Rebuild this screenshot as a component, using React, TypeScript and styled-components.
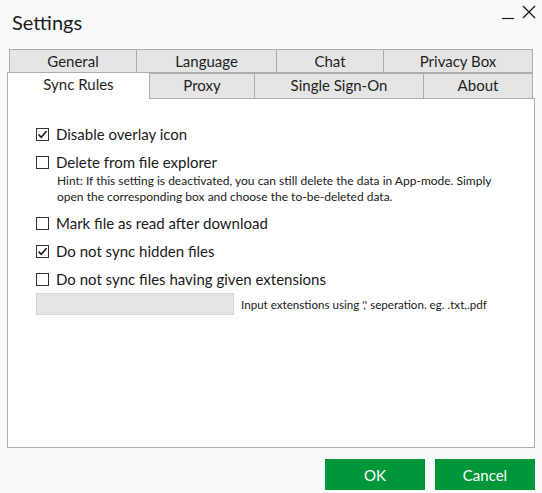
import styled, { createGlobalStyle } from "styled-components";

const Global = createGlobalStyle`
    html, body {
        margin: 0;
        padding: 0;
        background: #f9fafb;
        font-family: "Lato", "Open Sans", sans-serif;
        color: #1a1a1a;
    }
`

const Window = styled.section`
    display: flex;
    flex-direction: column;
    width: 542px;
    height: 493px;
    box-sizing: border-box;
    background: #f9fafb;
`

const TitleBar = styled.header`
    display: flex;
    justify-content: space-between;
    align-items: flex-start;
    height: 49px;
    padding: 10px 6px 0 12px;
    box-sizing: border-box;
`

const Title = styled.h1`
    margin: 0;
    font-size: 20px;
    font-weight: 400;
    color: #1a1a1a;
`

const WinControls = styled.div`
    display: flex;
    align-items: flex-start;
    gap: 7px;
    margin-top: -10px;
    svg {
        display: block;
    }
`

const Tabs = styled.nav`
    display: flex;
    flex-direction: column;
    padding-left: 7px;
`

const TabRow = styled.div<{ $indent: number }>`
    display: flex;
    padding-left: ${p => p.$indent}px;
    margin-top: ${p => (p.$indent ? 0 : -1)}px;
    align-items: flex-end;
`

const Tab = styled.div<{ $w: number; $h: number; $pad: number; $active?: boolean }>`
    display: flex;
    justify-content: center;
    align-items: center;
    width: ${p => p.$w}px;
    height: ${p => p.$h}px;
    box-sizing: border-box;
    border: 1px solid #adadad;
    border-bottom: ${p => (p.$active ? "none" : "1px solid #adadad")};
    margin-left: -1px;
    background: ${p => (p.$active ? "#ffffff" : "#e5e5e5")};
    font-size: 15px;
    color: #1f1f1f;
    position: relative;
    z-index: ${p => (p.$active ? 2 : 1)};
    padding-bottom: ${p => p.$pad}px;
    &:first-child {
        margin-left: 0;
    }
`

const Panel = styled.div`
    margin: -1px 7px 0 7px;
    height: 350px;
    box-sizing: border-box;
    border: 1px solid #adadad;
    background: #ffffff;
    padding: 25px 0 0 28px;
    display: flex;
    flex-direction: column;
`

const Option = styled.label`
    display: flex;
    align-items: center;
    gap: 7px;
    height: 20px;
    font-size: 15px;
    color: #1a1a1a;
    margin-bottom: 8px;
`

const Box = styled.span`
    display: inline-flex;
    justify-content: center;
    align-items: center;
    width: 13px;
    height: 13px;
    box-sizing: border-box;
    border: 1px solid #333333;
    background: #ffffff;
`

const Hint = styled.p`
    margin: -7px 0 8px 21px;
    font-size: 12px;
    line-height: 16px;
    color: #1a1a1a;
`

const InputLine = styled.div`
    display: flex;
    align-items: center;
    gap: 7px;
    margin-top: -4px;
`

const ExtInput = styled.input`
    all: unset;
    width: 198px;
    height: 22px;
    box-sizing: border-box;
    background: #e6e6e6;
    border: 1px solid #d4d4d4;
`

const InputHint = styled.span`
    font-size: 11.6px;
    color: #1a1a1a;
`

const Footer = styled.footer`
    display: flex;
    justify-content: flex-end;
    gap: 10px;
    padding: 11px 7px 0 0;
`

const Button = styled.button`
    all: unset;
    display: flex;
    justify-content: center;
    align-items: center;
    width: 100px;
    height: 31px;
    background: #00963a;
    color: #ffffff;
    font-family: "Lato", "Open Sans", sans-serif;
    font-size: 15px;
    cursor: pointer;
`

function Check({ checked }: { checked?: boolean }) {
    return (
        <Box>
            {checked && (
                <svg width="11" height="11" viewBox="0 0 11 11">
                    <path d="M1.5 5.5 L4.2 8.3 L9.5 2.2" fill="none" stroke="#1a1a1a" strokeWidth="1.6" />
                </svg>
            )}
        </Box>
    )
}

const row1 = [
    { label: "General", w: 128 },
    { label: "Language", w: 141 },
    { label: "Chat", w: 108 },
    { label: "Privacy Box", w: 150 },
]

const row2 = [
    { label: "Sync Rules", w: 143, active: true },
    { label: "Proxy", w: 106 },
    { label: "Single Sign-On", w: 170 },
    { label: "About", w: 110 },
]

function App() {
    return (
        <>
            <Global />
            <Window>
                <TitleBar>
                    <Title>Settings</Title>
                    <WinControls>
                        <svg width="13" height="20" viewBox="0 0 13 20">
                            <path d="M0 18.5 H12" stroke="#1a1a1a" strokeWidth="1.2" />
                        </svg>
                        <svg width="14" height="20" viewBox="0 0 14 20">
                            <path d="M1 6 L13 18 M13 6 L1 18" stroke="#1a1a1a" strokeWidth="1.3" />
                        </svg>
                    </WinControls>
                </TitleBar>
                <Tabs>
                    <TabRow $indent={2}>
                        {row1.map(t => <Tab key={t.label} $w={t.w} $h={24} $pad={1}>{t.label}</Tab>)}
                    </TabRow>
                    <TabRow $indent={0}>
                        {row2.map(t => (
                            <Tab key={t.label} $w={t.w} $h={t.active ? 27 : 26} $pad={t.active ? 4 : 3} $active={t.active}>
                                {t.label}
                            </Tab>
                        ))}
                    </TabRow>
                </Tabs>
                <Panel>
                    <Option><Check checked />Disable overlay icon</Option>
                    <Option><Check />Delete from file explorer</Option>
                    <Hint>
                        Hint: If this setting is deactivated, you can still delete the data in App-mode. Simply<br />
                        open the corresponding box and choose the to-be-deleted data.
                    </Hint>
                    <Option><Check />Mark file as read after download</Option>
                    <Option><Check checked />Do not sync hidden files</Option>
                    <Option><Check />Do not sync files having given extensions</Option>
                    <InputLine>
                        <ExtInput />
                        <InputHint>Input extenstions using ',' seperation. eg. .txt,.pdf</InputHint>
                    </InputLine>
                </Panel>
                <Footer>
                    <Button>OK</Button>
                    <Button>Cancel</Button>
                </Footer>
            </Window>
        </>
    )
}

export default App;
